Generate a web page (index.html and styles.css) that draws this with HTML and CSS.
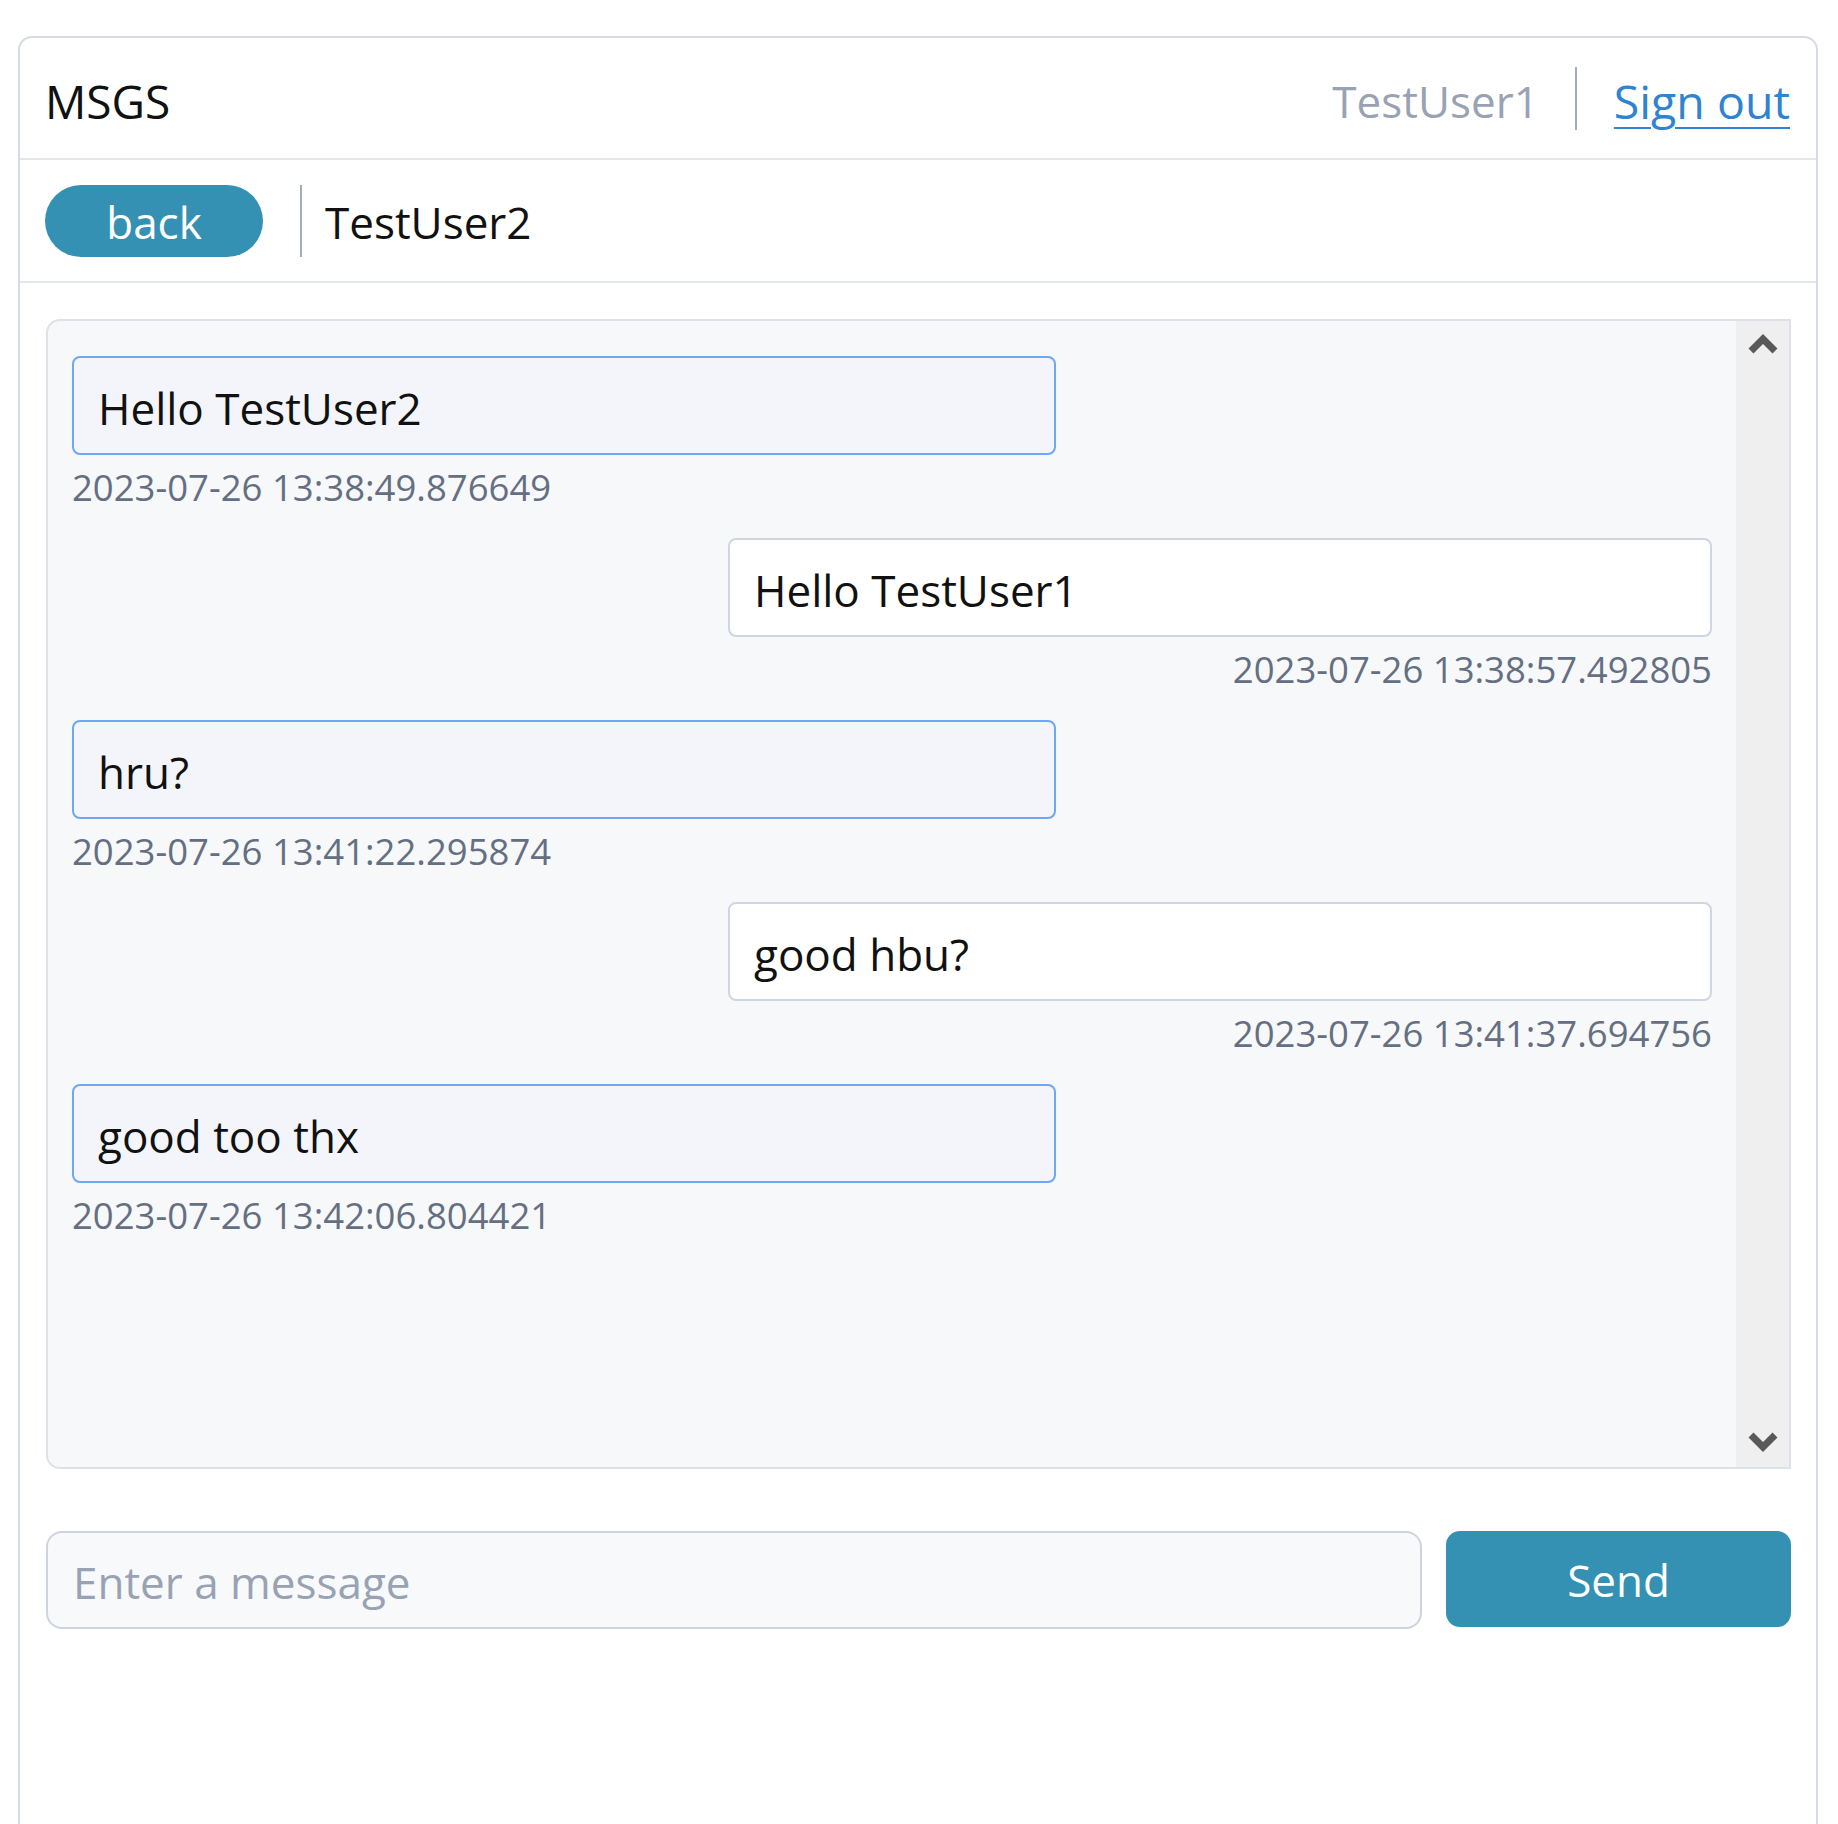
FILE: index.html
```html
<!DOCTYPE html>
<html lang="en">
<head>
<meta charset="utf-8">
<title>MSGS</title>
<link rel="stylesheet" href="styles.css">
</head>
<body>
<div class="card">
  <header class="topbar">
    <div class="brand">MSGS</div>
    <nav class="account">
      <span class="user">TestUser1</span>
      <span class="vsep"></span>
      <a class="signout" href="#">Sign out</a>
    </nav>
  </header>
  <div class="convbar">
    <button class="back" type="button">back</button>
    <span class="vsep conv-sep"></span>
    <span class="peer">TestUser2</span>
  </div>
  <main class="chat">
    <section class="thread">
      <div class="thread-list">
        <div class="msg in">
          <div class="bubble">Hello TestUser2</div>
          <div class="time">2023-07-26 13:38:49.876649</div>
        </div>
        <div class="msg out">
          <div class="bubble">Hello TestUser1</div>
          <div class="time">2023-07-26 13:38:57.492805</div>
        </div>
        <div class="msg in">
          <div class="bubble">hru?</div>
          <div class="time">2023-07-26 13:41:22.295874</div>
        </div>
        <div class="msg out">
          <div class="bubble">good hbu?</div>
          <div class="time">2023-07-26 13:41:37.694756</div>
        </div>
        <div class="msg in">
          <div class="bubble">good too thx</div>
          <div class="time">2023-07-26 13:42:06.804421</div>
        </div>
      </div>
      <div class="scrollbar">
        <svg class="chev" width="30" height="22" viewBox="0 0 30 22"><polyline points="3,18 15,6 27,18" fill="none" stroke="#595959" stroke-width="7"/></svg>
        <svg class="chev" width="30" height="22" viewBox="0 0 30 22"><polyline points="3,4 15,16 27,4" fill="none" stroke="#595959" stroke-width="7"/></svg>
      </div>
    </section>
    <form class="composer">
      <input class="field" type="text" placeholder="Enter a message">
      <button class="send" type="button">Send</button>
    </form>
  </main>
</div>
</body>
</html>
```

FILE: styles.css
```css
* { box-sizing: border-box; }

html, body {
  margin: 0;
  padding: 0;
  background: #ffffff;
}

body {
  font-family: "Open Sans", "Noto Sans", sans-serif;
  font-size: 44px;
  color: #111111;
  overflow: hidden;
}

.card {
  margin: 36px 20px 0 18px;
  border: 2px solid #d6dce6;
  border-bottom: none;
  border-radius: 14px 14px 0 0;
  min-height: 1900px;
  background: #ffffff;
}

.topbar {
  height: 122px;
  display: flex;
  align-items: center;
  justify-content: space-between;
  padding: 5px 26px 0 25px;
  border-bottom: 2px solid #e3e6eb;
}

.brand {
  color: #111111;
  font-size: 46px;
}

.account {
  display: flex;
  align-items: center;
}

.user {
  color: #98a2b3;
}

.vsep {
  display: block;
  width: 2px;
  height: 63px;
  background: #a3adbf;
  margin: 0 37px 0 36px;
}

.account .vsep {
  margin-top: -5px;
}

.signout {
  color: #2f84d2;
  font-size: 46.5px;
  text-decoration: underline;
  text-decoration-thickness: 2px;
  text-underline-offset: 8px;
}

.convbar {
  height: 123px;
  display: flex;
  align-items: center;
  padding: 0 24px 0 25px;
  border-bottom: 2px solid #e3e6eb;
}

.back {
  font-family: inherit;
  font-size: 44px;
  color: #ffffff;
  background: #3591b3;
  border: none;
  border-radius: 36px;
  width: 218px;
  height: 72px;
  padding: 2px 0 0;
  line-height: 70px;
}

.conv-sep {
  height: 72px;
  margin: 0 23px 0 37px;
}

.peer {
  color: #111111;
  padding-top: 3px;
}

.chat {
  padding: 36px 25px 0 26px;
}

.thread {
  display: flex;
  height: 1150px;
  border: 2px solid #dde2e9;
  border-right: none;
  border-radius: 14px 0 0 14px;
  background: #f7f8fa;
  overflow: hidden;
}

.thread-list {
  flex: 1;
  display: flex;
  flex-direction: column;
  padding: 35px 24px 0 24px;
}

.msg {
  display: flex;
  flex-direction: column;
  margin-bottom: 19px;
}

.msg.in { align-items: flex-start; }
.msg.out { align-items: flex-end; }

.bubble {
  width: 60%;
  height: 99px;
  display: flex;
  align-items: center;
  padding: 4px 24px 0;
  border-radius: 8px;
  border: 2px solid #cfd6e1;
  background: #ffffff;
  color: #111111;
}

.msg.in .bubble {
  border-color: #6fa6f6;
  background: #f3f5fa;
}

.time {
  font-size: 36.5px;
  line-height: 64px;
  color: #656f82;
}

.scrollbar {
  width: 55px;
  background: #efefef;
  display: flex;
  flex-direction: column;
  align-items: center;
  justify-content: space-between;
  padding: 12px 0 14px;
  border-top: 2px solid #dde2e9;
  border-bottom: 2px solid #dde2e9;
  border-right: 2px solid #dde2e9;
  margin-top: -2px;
  margin-bottom: -2px;
}

.composer {
  display: flex;
  gap: 24px;
  margin-top: 62px;
}

.field {
  flex: 1;
  height: 98px;
  border: 2px solid #cdd4df;
  border-radius: 16px;
  background: #f8f9fb;
  padding: 4px 25px 0;
  font-family: inherit;
  font-size: 44px;
  color: #111111;
  outline: none;
}

.field::placeholder {
  color: #98a2b3;
}

.send {
  width: 345px;
  height: 96px;
  border: none;
  border-radius: 14px;
  background: #3591b3;
  color: #ffffff;
  font-family: inherit;
  font-size: 44px;
  padding: 2px 0 0;
}
```
